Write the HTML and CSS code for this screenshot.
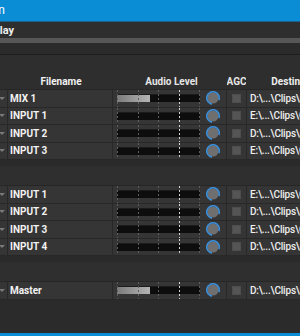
FILE: index.html
```html
<!DOCTYPE html>
<html lang="en">
<head>
    <meta charset="UTF-8">
    <meta name="viewport" content="width=device-width, initial-scale=1.0">
    <title>Recording Configuration</title>
    <link rel="stylesheet" href="styles.css">
</head>
<body>
    <div class="window">
        <div class="titlebar"><span class="title">Recording Configuration</span></div>
        <div class="menubar"><span class="menu-item">Replay</span></div>
        <div class="scrollbar"></div>
        <div class="toolbar"></div>

        <div class="band"></div>
        <div class="row head">
            <div class="cell c-sel"></div>
            <div class="cell c-name">Filename</div>
            <div class="cell c-audio">Audio Level</div>
            <div class="cell c-agc">AGC</div>
            <div class="cell c-dest">Destination</div>
        </div>

        <!-- group 1 -->
        <div class="row">
            <div class="cell c-sel"><span class="arrow"></span></div>
            <div class="cell c-name">MIX 1</div>
            <div class="cell c-audio">
                <div class="meter"><div class="bar"><div class="fill" style="width: 40%"></div></div><i class="t1"></i><i class="t2"></i><i class="t3"></i><i class="t4"></i><i class="t5"></i></div>
                <svg class="knob" viewBox="0 0 14 14"><circle cx="7" cy="7" r="5.6" fill="#6f6f6f"/><path d="M5.92 13.1A6.2 6.2 0 1 1 12.83 9.12" fill="none" stroke="#3b8fdb" stroke-width="1.6"/></svg>
            </div>
            <div class="cell c-agc"><span class="check"></span></div>
            <div class="cell c-dest">D:\...\Clips\Capture</div>
        </div>
        <div class="row">
            <div class="cell c-sel"><span class="arrow"></span></div>
            <div class="cell c-name">INPUT 1</div>
            <div class="cell c-audio">
                <div class="meter"><div class="bar"></div><i class="t1"></i><i class="t2"></i><i class="t3"></i><i class="t4"></i><i class="t5"></i></div>
                <svg class="knob" viewBox="0 0 14 14"><circle cx="7" cy="7" r="5.6" fill="#6f6f6f"/><path d="M5.92 13.1A6.2 6.2 0 1 1 12.83 9.12" fill="none" stroke="#3b8fdb" stroke-width="1.6"/></svg>
            </div>
            <div class="cell c-agc"><span class="check"></span></div>
            <div class="cell c-dest">E:\...\Clips\Capture</div>
        </div>
        <div class="row">
            <div class="cell c-sel"><span class="arrow"></span></div>
            <div class="cell c-name">INPUT 2</div>
            <div class="cell c-audio">
                <div class="meter"><div class="bar"></div><i class="t1"></i><i class="t2"></i><i class="t3"></i><i class="t4"></i><i class="t5"></i></div>
                <svg class="knob" viewBox="0 0 14 14"><circle cx="7" cy="7" r="5.6" fill="#6f6f6f"/><path d="M5.92 13.1A6.2 6.2 0 1 1 12.83 9.12" fill="none" stroke="#3b8fdb" stroke-width="1.6"/></svg>
            </div>
            <div class="cell c-agc"><span class="check"></span></div>
            <div class="cell c-dest">D:\...\Clips\Capture</div>
        </div>
        <div class="row">
            <div class="cell c-sel"><span class="arrow"></span></div>
            <div class="cell c-name">INPUT 3</div>
            <div class="cell c-audio">
                <div class="meter"><div class="bar"></div><i class="t1"></i><i class="t2"></i><i class="t3"></i><i class="t4"></i><i class="t5"></i></div>
                <svg class="knob" viewBox="0 0 14 14"><circle cx="7" cy="7" r="5.6" fill="#6f6f6f"/><path d="M5.92 13.1A6.2 6.2 0 1 1 12.83 9.12" fill="none" stroke="#3b8fdb" stroke-width="1.6"/></svg>
            </div>
            <div class="cell c-agc"><span class="check"></span></div>
            <div class="cell c-dest">E:\...\Clips\Capture</div>
        </div>

        <div class="band group"></div>

        <!-- group 2 -->
        <div class="row">
            <div class="cell c-sel"><span class="arrow"></span></div>
            <div class="cell c-name">INPUT 1</div>
            <div class="cell c-audio">
                <div class="meter"><div class="bar"></div><i class="t1"></i><i class="t2"></i><i class="t3"></i><i class="t4"></i><i class="t5"></i></div>
                <svg class="knob" viewBox="0 0 14 14"><circle cx="7" cy="7" r="5.6" fill="#6f6f6f"/><path d="M5.92 13.1A6.2 6.2 0 1 1 12.83 9.12" fill="none" stroke="#3b8fdb" stroke-width="1.6"/></svg>
            </div>
            <div class="cell c-agc"><span class="check"></span></div>
            <div class="cell c-dest">E:\...\Clips\Capture</div>
        </div>
        <div class="row">
            <div class="cell c-sel"><span class="arrow"></span></div>
            <div class="cell c-name">INPUT 2</div>
            <div class="cell c-audio">
                <div class="meter"><div class="bar"></div><i class="t1"></i><i class="t2"></i><i class="t3"></i><i class="t4"></i><i class="t5"></i></div>
                <svg class="knob" viewBox="0 0 14 14"><circle cx="7" cy="7" r="5.6" fill="#6f6f6f"/><path d="M5.92 13.1A6.2 6.2 0 1 1 12.83 9.12" fill="none" stroke="#3b8fdb" stroke-width="1.6"/></svg>
            </div>
            <div class="cell c-agc"><span class="check"></span></div>
            <div class="cell c-dest">D:\...\Clips\Capture</div>
        </div>
        <div class="row">
            <div class="cell c-sel"><span class="arrow"></span></div>
            <div class="cell c-name">INPUT 3</div>
            <div class="cell c-audio">
                <div class="meter"><div class="bar"></div><i class="t1"></i><i class="t2"></i><i class="t3"></i><i class="t4"></i><i class="t5"></i></div>
                <svg class="knob" viewBox="0 0 14 14"><circle cx="7" cy="7" r="5.6" fill="#6f6f6f"/><path d="M5.92 13.1A6.2 6.2 0 1 1 12.83 9.12" fill="none" stroke="#3b8fdb" stroke-width="1.6"/></svg>
            </div>
            <div class="cell c-agc"><span class="check"></span></div>
            <div class="cell c-dest">E:\...\Clips\Capture</div>
        </div>
        <div class="row">
            <div class="cell c-sel"><span class="arrow"></span></div>
            <div class="cell c-name">INPUT 4</div>
            <div class="cell c-audio">
                <div class="meter"><div class="bar"></div><i class="t1"></i><i class="t2"></i><i class="t3"></i><i class="t4"></i><i class="t5"></i></div>
                <svg class="knob" viewBox="0 0 14 14"><circle cx="7" cy="7" r="5.6" fill="#6f6f6f"/><path d="M5.92 13.1A6.2 6.2 0 1 1 12.83 9.12" fill="none" stroke="#3b8fdb" stroke-width="1.6"/></svg>
            </div>
            <div class="cell c-agc"><span class="check"></span></div>
            <div class="cell c-dest">D:\...\Clips\Capture</div>
        </div>

        <div class="band group"></div>

        <!-- master -->
        <div class="row">
            <div class="cell c-sel"><span class="arrow"></span></div>
            <div class="cell c-name">Master</div>
            <div class="cell c-audio">
                <div class="meter"><div class="bar"><div class="fill" style="width: 40%"></div></div><i class="t1"></i><i class="t2"></i><i class="t3"></i><i class="t4"></i><i class="t5"></i></div>
                <svg class="knob" viewBox="0 0 14 14"><circle cx="7" cy="7" r="5.6" fill="#6f6f6f"/><path d="M5.92 13.1A6.2 6.2 0 1 1 12.83 9.12" fill="none" stroke="#3b8fdb" stroke-width="1.6"/></svg>
            </div>
            <div class="cell c-agc"><span class="check"></span></div>
            <div class="cell c-dest">D:\...\Clips\Capture</div>
        </div>

        <div class="footer"></div>
        <div class="statusbar"></div>
    </div>
</body>
</html>
```

FILE: styles.css
```css
* {
    margin: 0;
    padding: 0;
    box-sizing: border-box;
}

body {
    width: 300px;
    height: 336px;
    overflow: hidden;
    background: #2b2b2b;
    font-family: Roboto, 'Liberation Sans', sans-serif;
    color: #eeeeee;
}

.window {
    width: 360px;
}

.titlebar {
    height: 22px;
    background: #0b8dd5;
    border-bottom: 1px solid #19618f;
    font-size: 12px;
    line-height: 21px;
    color: #ffffff;
}

.title {
    display: block;
    margin-left: -160px;
    width: 165px;
    text-align: right;
    white-space: nowrap;
}

.menubar {
    height: 16px;
    background: #2e2e2e;
    font-size: 11px;
    font-weight: 700;
    line-height: 17px;
}

.menu-item {
    display: block;
    margin-left: -100px;
    width: 114px;
    text-align: right;
    white-space: nowrap;
}

.scrollbar {
    height: 5px;
    background: #575757;
}

.toolbar {
    height: 12px;
    background: #2b2b2b;
    border-bottom: 1px solid #1d1d1d;
}

.band {
    height: 17px;
    background: #2e2e2e;
}

.band.group {
    height: 26px;
    background: linear-gradient(#2a2a2a 0 6px, #2f2f2f 6px);
    border-bottom: 1px solid #262626;
}

.row {
    display: flex;
    height: 17.5px;
    background: #353535;
    border-bottom: 1px solid #282828;
    font-size: 10px;
}

.row.head {
    height: 18px;
    background: #2e2e2e;
    border-bottom-color: #262626;
    font-weight: 700;
    color: #e6e6e6;
}

.cell {
    display: flex;
    align-items: center;
    height: 100%;
    border-right: 1px solid #282828;
    white-space: nowrap;
    overflow: hidden;
}

.head .cell {
    justify-content: center;
    border-right-color: transparent;
    padding-top: 1px;
}

.c-sel {
    width: 8px;
    justify-content: flex-start;
}

.c-name {
    width: 105px;
    padding-left: 2px;
    font-weight: 700;
    color: #f2f2f2;
}

.c-audio {
    width: 114px;
    padding-left: 4px;
}

.c-agc {
    width: 20px;
    justify-content: center;
}

.c-dest {
    width: 98px;
    padding-left: 3px;
    font-weight: 500;
    letter-spacing: -0.2px;
    color: #eeeeee;
}

.head .c-dest {
    font-weight: 700;
    letter-spacing: 0;
}

.arrow {
    width: 0;
    height: 0;
    margin-left: -1px;
    border-left: 3px solid transparent;
    border-right: 3px solid transparent;
    border-top: 3px solid #7a7a7a;
}

.meter {
    position: relative;
    width: 83px;
    height: 100%;
    display: flex;
    align-items: center;
}

.bar {
    width: 83px;
    height: 8px;
    background: #0d0d0d;
    border-top: 1px solid #1b1b1b;
}

.fill {
    height: 100%;
    background: linear-gradient(to right, #7c7c7c, #b4b4b4);
}

.meter i {
    position: absolute;
    top: 0;
    bottom: 0;
    width: 1px;
    background: repeating-linear-gradient(to bottom, #5e5e5e 0 2px, transparent 2px 4px);
}

.meter .t1 { left: 0; }
.meter .t2 { left: 21px; }
.meter .t3 { left: 41px; }
.meter .t4 {
    left: 62px;
    background: repeating-linear-gradient(to bottom, #d6d6d6 0 2px, transparent 2px 4px);
}
.meter .t5 { left: 82px; }

.knob {
    width: 14px;
    height: 14px;
    margin-left: 6px;
}

.check {
    width: 9px;
    height: 9px;
    background: #555555;
    border: 1px solid #4d4d4d;
}

.footer {
    height: 33px;
    background: #2b2b2b;
}

.statusbar {
    height: 3px;
    background: #0b8dd5;
}
```
